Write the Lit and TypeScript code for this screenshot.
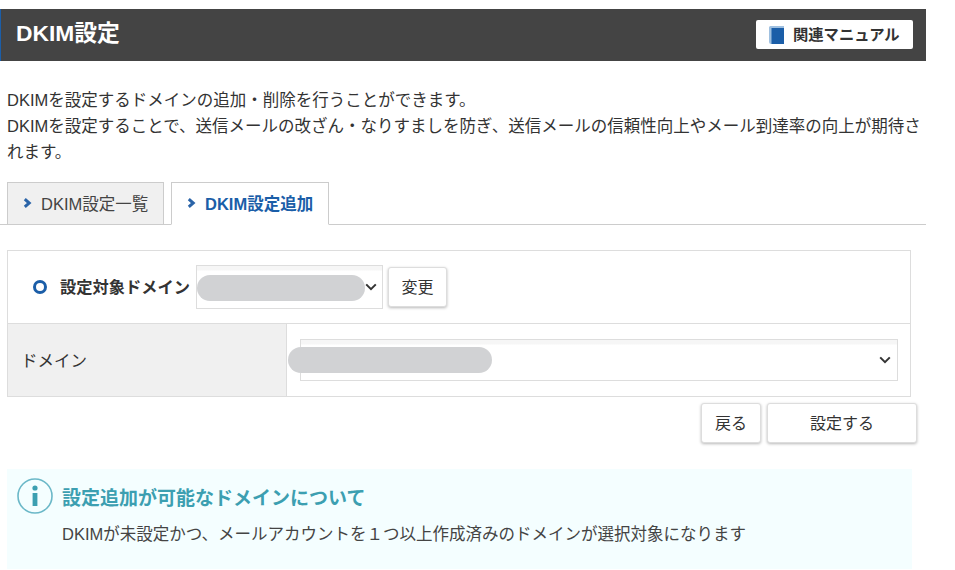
import { LitElement, html, css } from "lit";
import { customElement } from "lit/decorators.js";

const chevron = html`<svg class="chev" width="12" height="8" viewBox="0 0 12 8"><path d="M1.2 1.4 6 6.2l4.8-4.8" fill="none" stroke="#333" stroke-width="2"/></svg>`;
const arrow = html`<svg class="arrow" width="9" height="10" viewBox="0 0 9 10"><path d="M1.8 1.2 6.2 5 1.8 8.8" fill="none" stroke="#2b64a8" stroke-width="3"/></svg>`;

@customElement("app-root")
export class AppRoot extends LitElement {
  static styles = css`
    :host { display: block; width: 955px; height: 570px; overflow: hidden; background: #fff; color: #333;
      font-family: "Liberation Sans", "Noto Sans CJK JP", sans-serif; font-size: 16.5px; box-sizing: border-box; padding-top: 9px; }
    * { box-sizing: border-box; }
    .head { width: 926px; height: 52px; background: #444; border-left: 1px solid #1b5ea8; display: flex; align-items: center; justify-content: space-between; padding: 0 13px 0 15px; }
    .head h1 { margin: 0 0 4px; color: #fff; font-size: 22.8px; font-weight: 700; line-height: 30px; }
    .manual { width: 157px; height: 29px; margin-bottom: 1px; background: #fff; border-radius: 2px; display: flex; align-items: center; gap: 9px; padding: 0 0 4px 13px; font-size: 15.3px; font-weight: 700; color: #333; white-space: nowrap; }
    .manual svg { margin-top: 4px; }
    .desc { margin: 26px 0 0; width: 926px; padding: 0 0 0 7px; line-height: 26px; color: #333; }
    .tabs { margin-top: 17px; width: 926px; height: 43px; display: flex; gap: 7px; padding-left: 7px; border-bottom: 1px solid #ccc; }
    .tab { height: 43px; display: flex; align-items: center; border: 1px solid #ccc; gap: 9px; padding: 0 0 2px 15px; white-space: nowrap; }
    .tab.off { width: 157px; background: #f0f0f0; color: #444; }
    .tab.on { width: 158px; background: #fff; border-bottom: 1px solid #fff; color: #1b5ea8; font-weight: 700; }
    .arrow { flex: none; }
    .table { margin: 25px 0 0 7px; width: 904px; border: 1px solid #ddd; }
    .row1 { height: 73px; display: flex; align-items: center; padding-left: 25px; border-bottom: 1px solid #ddd; }
    .dot { width: 14px; height: 14px; border: 3.5px solid #1b5ea8; border-radius: 50%; flex: none; margin-right: 13px; }
    .lab { font-weight: 700; white-space: nowrap; margin-right: 5px; padding-bottom: 2px; width: 131px; font-size: 16.25px; }
    .select { position: relative; height: 44px; border: 1px solid #ddd; background: linear-gradient(#f6f6f6 0, #f6f6f6 4px, #fff 5px); display: flex; align-items: center; justify-content: flex-end; padding-right: 5px; }
    .sel1 { width: 187px; margin-top: -1px; }
    .sel2 { width: 598px; height: 42px; padding-right: 6px; }
    .pill { position: absolute; background: #d1d2d4; border-radius: 13px; height: 26px; }
    .sel1 .pill { left: 0; top: 9px; width: 168px; }
    .sel2 .pill { left: -13px; top: 7px; width: 204px; }
    .btn { background: #fff; border: 1px solid #ddd; border-radius: 3px; box-shadow: 0 1px 3px rgba(0,0,0,.28); display: flex; align-items: center; justify-content: center; color: #333; font-size: 16px; height: 40px; padding-bottom: 2px; }
    .change { width: 59px; margin-left: 5px; }
    .row2 { height: 72px; display: flex; }
    .th { width: 279px; background: #f0f0f0; border-right: 1px solid #ddd; display: flex; align-items: center; padding: 0 0 1px 13px; }
    .td { flex: 1; display: flex; align-items: center; padding-left: 13px; }
    .actions { margin-top: 6px; width: 917px; display: flex; justify-content: flex-end; gap: 6px; }
    .back { width: 60px; }
    .submit { width: 150px; }
    .info { margin: 26px 0 0 7px; width: 905px; height: 100px; background: #f4feff; padding: 9px 0 0 10px; display: flex; gap: 9px; }
    .info svg { flex: none; }
    .info h2 { margin: 7px 0 0; font-size: 19px; line-height: 28px; font-weight: 700; color: #3c9fb1; }
    .info p { margin: 8px 0 0; line-height: 26px; color: #444; }
  `;

  render() {
    return html`
      <div class="head">
        <h1>DKIM設定</h1>
        <div class="manual">
          <svg width="15" height="18" viewBox="0 0 15 18"><path d="M1.5 0H15v18H2a2 2 0 0 1-2-2V1.5A1.5 1.5 0 0 1 1.5 0z" fill="#9fc0e0"/><rect x="2.5" y="2" width="12.5" height="16" fill="#1b5ea8"/></svg>
          関連マニュアル
        </div>
      </div>
      <p class="desc">DKIMを設定するドメインの追加・削除を行うことができます。<br>DKIMを設定することで、送信メールの改ざん・なりすましを防ぎ、送信メールの信頼性向上やメール到達率の向上が期待されます。</p>
      <div class="tabs">
        <div class="tab off">${arrow}DKIM設定一覧</div>
        <div class="tab on">${arrow}DKIM設定追加</div>
      </div>
      <div class="table">
        <div class="row1">
          <span class="dot"></span><span class="lab">設定対象ドメイン</span>
          <div class="select sel1"><span class="pill"></span>${chevron}</div>
          <div class="btn change">変更</div>
        </div>
        <div class="row2">
          <div class="th">ドメイン</div>
          <div class="td"><div class="select sel2"><span class="pill"></span>${chevron}</div></div>
        </div>
      </div>
      <div class="actions"><div class="btn back">戻る</div><div class="btn submit">設定する</div></div>
      <div class="info">
        <svg width="36" height="36" viewBox="0 0 36 36"><circle cx="18" cy="18" r="17" fill="none" stroke="#6bb8c8" stroke-width="1.6"/><circle cx="18" cy="10" r="2.6" fill="#3c9fb1"/><rect x="15.6" y="15" width="4.8" height="13" fill="#3c9fb1"/></svg>
        <div>
          <h2>設定追加が可能なドメインについて</h2>
          <p>DKIMが未設定かつ、メールアカウントを１つ以上作成済みのドメインが選択対象になります</p>
        </div>
      </div>
    `;
  }
}
